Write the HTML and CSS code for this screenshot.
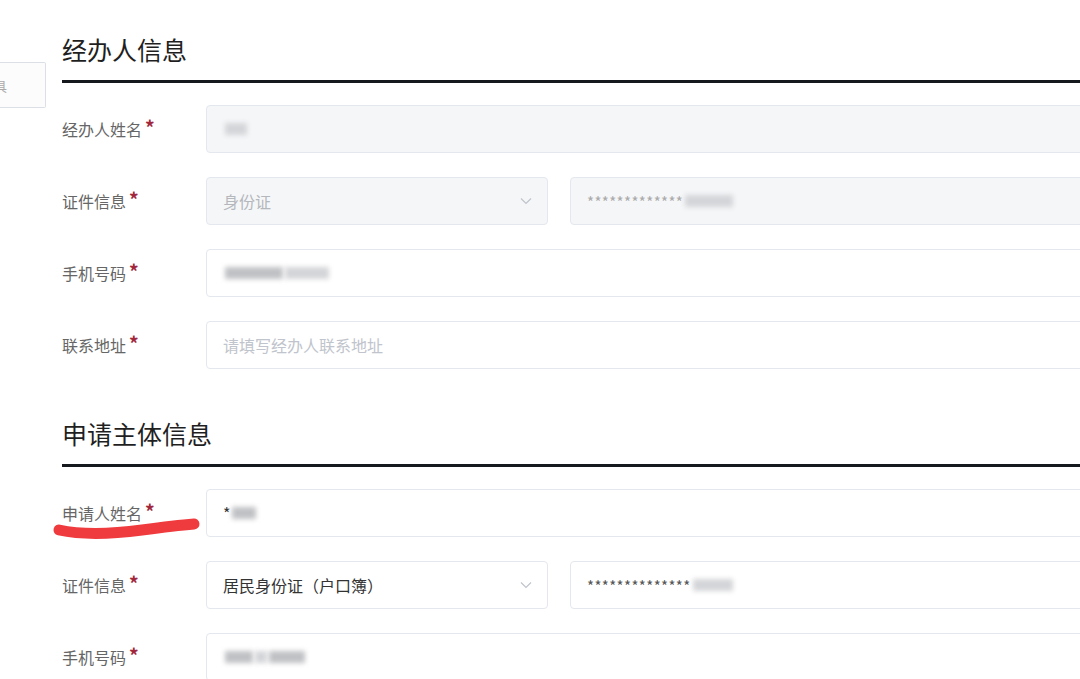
FILE: index.html
```html
<!DOCTYPE html>
<html><head>
  <meta charset="UTF-8">
  <title>经办人信息</title>
  <link rel="stylesheet" href="styles.css">
</head><body>
<div class="page">
  <div class="side">
    <div class="tab"><span>工具</span></div>
  </div>
  <div class="main">
    <h2 class="sec">经办人信息</h2>
    <div class="row">
      <div class="label">经办人姓名<i>*</i></div>
      <div class="box off"><span class="blob" style="width:22px"></span></div>
    </div>
    <div class="row">
      <div class="label">证件信息<i>*</i></div>
      <div class="box off sel">身份证<svg class="chev" width="12" height="8" viewBox="0 0 12 8"><path d="M1 1.5l5 5 5-5" fill="none" stroke="#c0c4cc" stroke-width="1.2"/></svg></div>
      <div class="box off"><span class="mask">*************</span><span class="blob" style="width:48px"></span></div>
    </div>
    <div class="row">
      <div class="label">手机号码<i>*</i></div>
      <div class="box"><span class="blob dark" style="width:58px"></span><span class="blob" style="width:44px"></span></div>
    </div>
    <div class="row">
      <div class="label">联系地址<i>*</i></div>
      <div class="box ph">请填写经办人联系地址</div>
    </div>

    <h2 class="sec">申请主体信息</h2>
    <div class="row">
      <div class="label">申请人姓名<i>*</i></div>
      <div class="box"><span class="val">*</span><span class="blob dark" style="width:24px"></span></div>
    </div>
    <div class="row">
      <div class="label">证件信息<i>*</i></div>
      <div class="box sel val">居民身份证（户口簿）<svg class="chev" width="12" height="8" viewBox="0 0 12 8"><path d="M1 1.5l5 5 5-5" fill="none" stroke="#c0c4cc" stroke-width="1.2"/></svg></div>
      <div class="box"><span class="mask dk">**************</span><span class="blob" style="width:40px"></span></div>
    </div>
    <div class="row">
      <div class="label">手机号码<i>*</i></div>
      <div class="box"><span class="blob dark" style="width:28px"></span><span class="blob" style="width:12px"></span><span class="blob dark" style="width:36px"></span></div>
    </div>
  </div>
</div>
<svg class="mark" width="160" height="30" viewBox="0 0 160 30"><path d="M7 15 C30 20 60 19 90 15 S130 10 142 9" fill="none" stroke="#ef3b3e" stroke-width="11" stroke-linecap="round"/></svg>
</body>
</html>
```

FILE: styles.css
```css
html,body{
  margin:0;
  height:100%;
  overflow:hidden;
  background:#fff;
}
body{
  font-family:"Noto Sans CJK SC","Noto Sans",sans-serif;
  color:#333;
  position:relative;
}
.page{
  display:flex;
}
.side{
  width:46px;
  flex:none;
  padding-top:62px;
}
.tab{
  height:44px;
  border:1px solid #dcdfe6;
  border-left:none;
  border-radius:0 2px 2px 0;
  overflow:hidden;
  display:flex;
  align-items:center;
  justify-content:flex-end;
  background:#fcfcfd;
}
.tab span{
  font-size:13px;
  color:#aaa;
  white-space:nowrap;
  margin-right:38px;
}
.main{
  flex:1;
  padding-left:16px;
  margin-right:-60px;
}
.sec{
  margin:0 0 22px;
  padding:33px 0 15px;
  font-size:25px;
  line-height:32px;
  font-weight:400;
  color:#1f1f1f;
  border-bottom:3px solid #15191e;
}
.row + .sec{
  margin-top:48px;
  padding-top:0;
}
.row{
  display:flex;
  align-items:center;
  gap:22px;
  height:48px;
  margin-bottom:24px;
}
.label{
  width:144px;
  margin-right:-22px;
  flex:none;
  font-size:16px;
  color:#666;
  position:relative;
  top:-2px;
}
.label i{
  font-style:normal;
  color:#a0283a;
  margin-left:3px;
  font-size:19px;
  font-weight:700;
  position:relative;
  top:-1px;
}
.box{
  flex:1;
  height:46px;
  border:1px solid #e4e7ed;
  border-radius:4px;
  background:#fff;
  display:flex;
  align-items:center;
  padding:0 16px;
  font-size:16px;
  color:#333;
}
.box.off{
  background:#f5f6f8;
  color:#b4b7bc;
}
.box.sel{
  flex:none;
  width:308px;
  justify-content:space-between;
}
.box.ph{
  color:#c0c4cc;
}
.chev{
  margin-right:-1px;
}
.mask{
  font-size:15px;
  letter-spacing:0.4px;
  color:#aaa;
}
.mask.dk{
  color:#555;
}
.val{
  color:#333;
}
.blob{
  display:inline-block;
  height:12px;
  background:#d4d5d8;
  filter:blur(2.5px);
  margin-left:2px;
}
.blob.dark{
  background:#c0c1c4;
}
.mark{
  position:absolute;
  left:52px;
  top:515px;
}
```
